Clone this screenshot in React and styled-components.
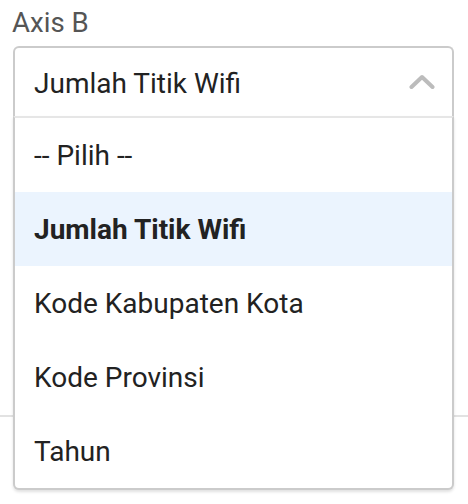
import React from "react";
import styled, { createGlobalStyle } from "styled-components";

const Global = createGlobalStyle`
  html, body { margin: 0; padding: 0; background: #fff; }
  body { font-family: Roboto, "Liberation Sans", sans-serif; }
`;

const Page = styled.div`
  width: 468px;
  height: 504px;
  position: relative;
  overflow: hidden;
  display: flex;
  flex-direction: column;
`;

const Field = styled.div`
  padding: 6px 14px 0 13px;
  display: flex;
  flex-direction: column;
  position: relative;
  z-index: 2;
`;

const Label = styled.div`
  font-size: 27.6px;
  line-height: 34px;
  color: #555;
  margin-left: -1px;
  margin-bottom: 6px;
`;

const SelectWrap = styled.div`
  position: relative;
`;

const Trigger = styled.div`
  height: 70px;
  box-sizing: border-box;
  border: 2px solid #cbcbcb;
  border-bottom: none;
  border-radius: 6px 6px 0 0;
  display: flex;
  align-items: center;
  justify-content: space-between;
  padding: 2px 17px 0 19px;
  font-size: 28px;
  color: #222;
`;

const Menu = styled.ul`
  position: absolute;
  top: 100%;
  left: 0;
  right: 0;
  margin: 0;
  padding: 0;
  list-style: none;
  background: #fff;
  border: 2px solid #cbcbcb;
  border-top: 2px solid #e6e6e6;
  border-radius: 0 0 6px 6px;
  box-shadow: 0 2px 3px rgba(0, 0, 0, 0.12);
  overflow: hidden;
`;

const Option = styled.li`
  height: 74px;
  display: flex;
  align-items: center;
  padding: 0 19px;
  font-size: 28px;
  color: #222;
  background: ${(p) => (p.$active ? "#ebf4fe" : "transparent")};
  font-weight: ${(p) => (p.$active ? 700 : 400)};
`;

const Divider = styled.div`
  position: absolute;
  left: 0;
  right: 0;
  top: 415px;
  height: 2px;
  background: #e2e2e2;
  z-index: 1;
`;

const Chevron = () => (
  <svg width="26" height="16" viewBox="0 0 26 16" style={{ marginTop: -2 }}>
    <path d="M2.5 13 L13 3 L23.5 13" fill="none" stroke="#bcbcbc" strokeWidth="4" strokeLinecap="round" strokeLinejoin="round" />
  </svg>
);

const options = ["-- Pilih --", "Jumlah Titik Wifi", "Kode Kabupaten Kota", "Kode Provinsi", "Tahun"];

export default function App() {
  return (
    <Page>
      <Global />
      <Divider />
      <Field>
        <Label>Axis B</Label>
        <SelectWrap>
          <Trigger>
            <span>Jumlah Titik Wifi</span>
            <Chevron />
          </Trigger>
          <Menu>
            {options.map((o) => (
              <Option key={o} $active={o === "Jumlah Titik Wifi"}>
                {o}
              </Option>
            ))}
          </Menu>
        </SelectWrap>
      </Field>
    </Page>
  );
}
